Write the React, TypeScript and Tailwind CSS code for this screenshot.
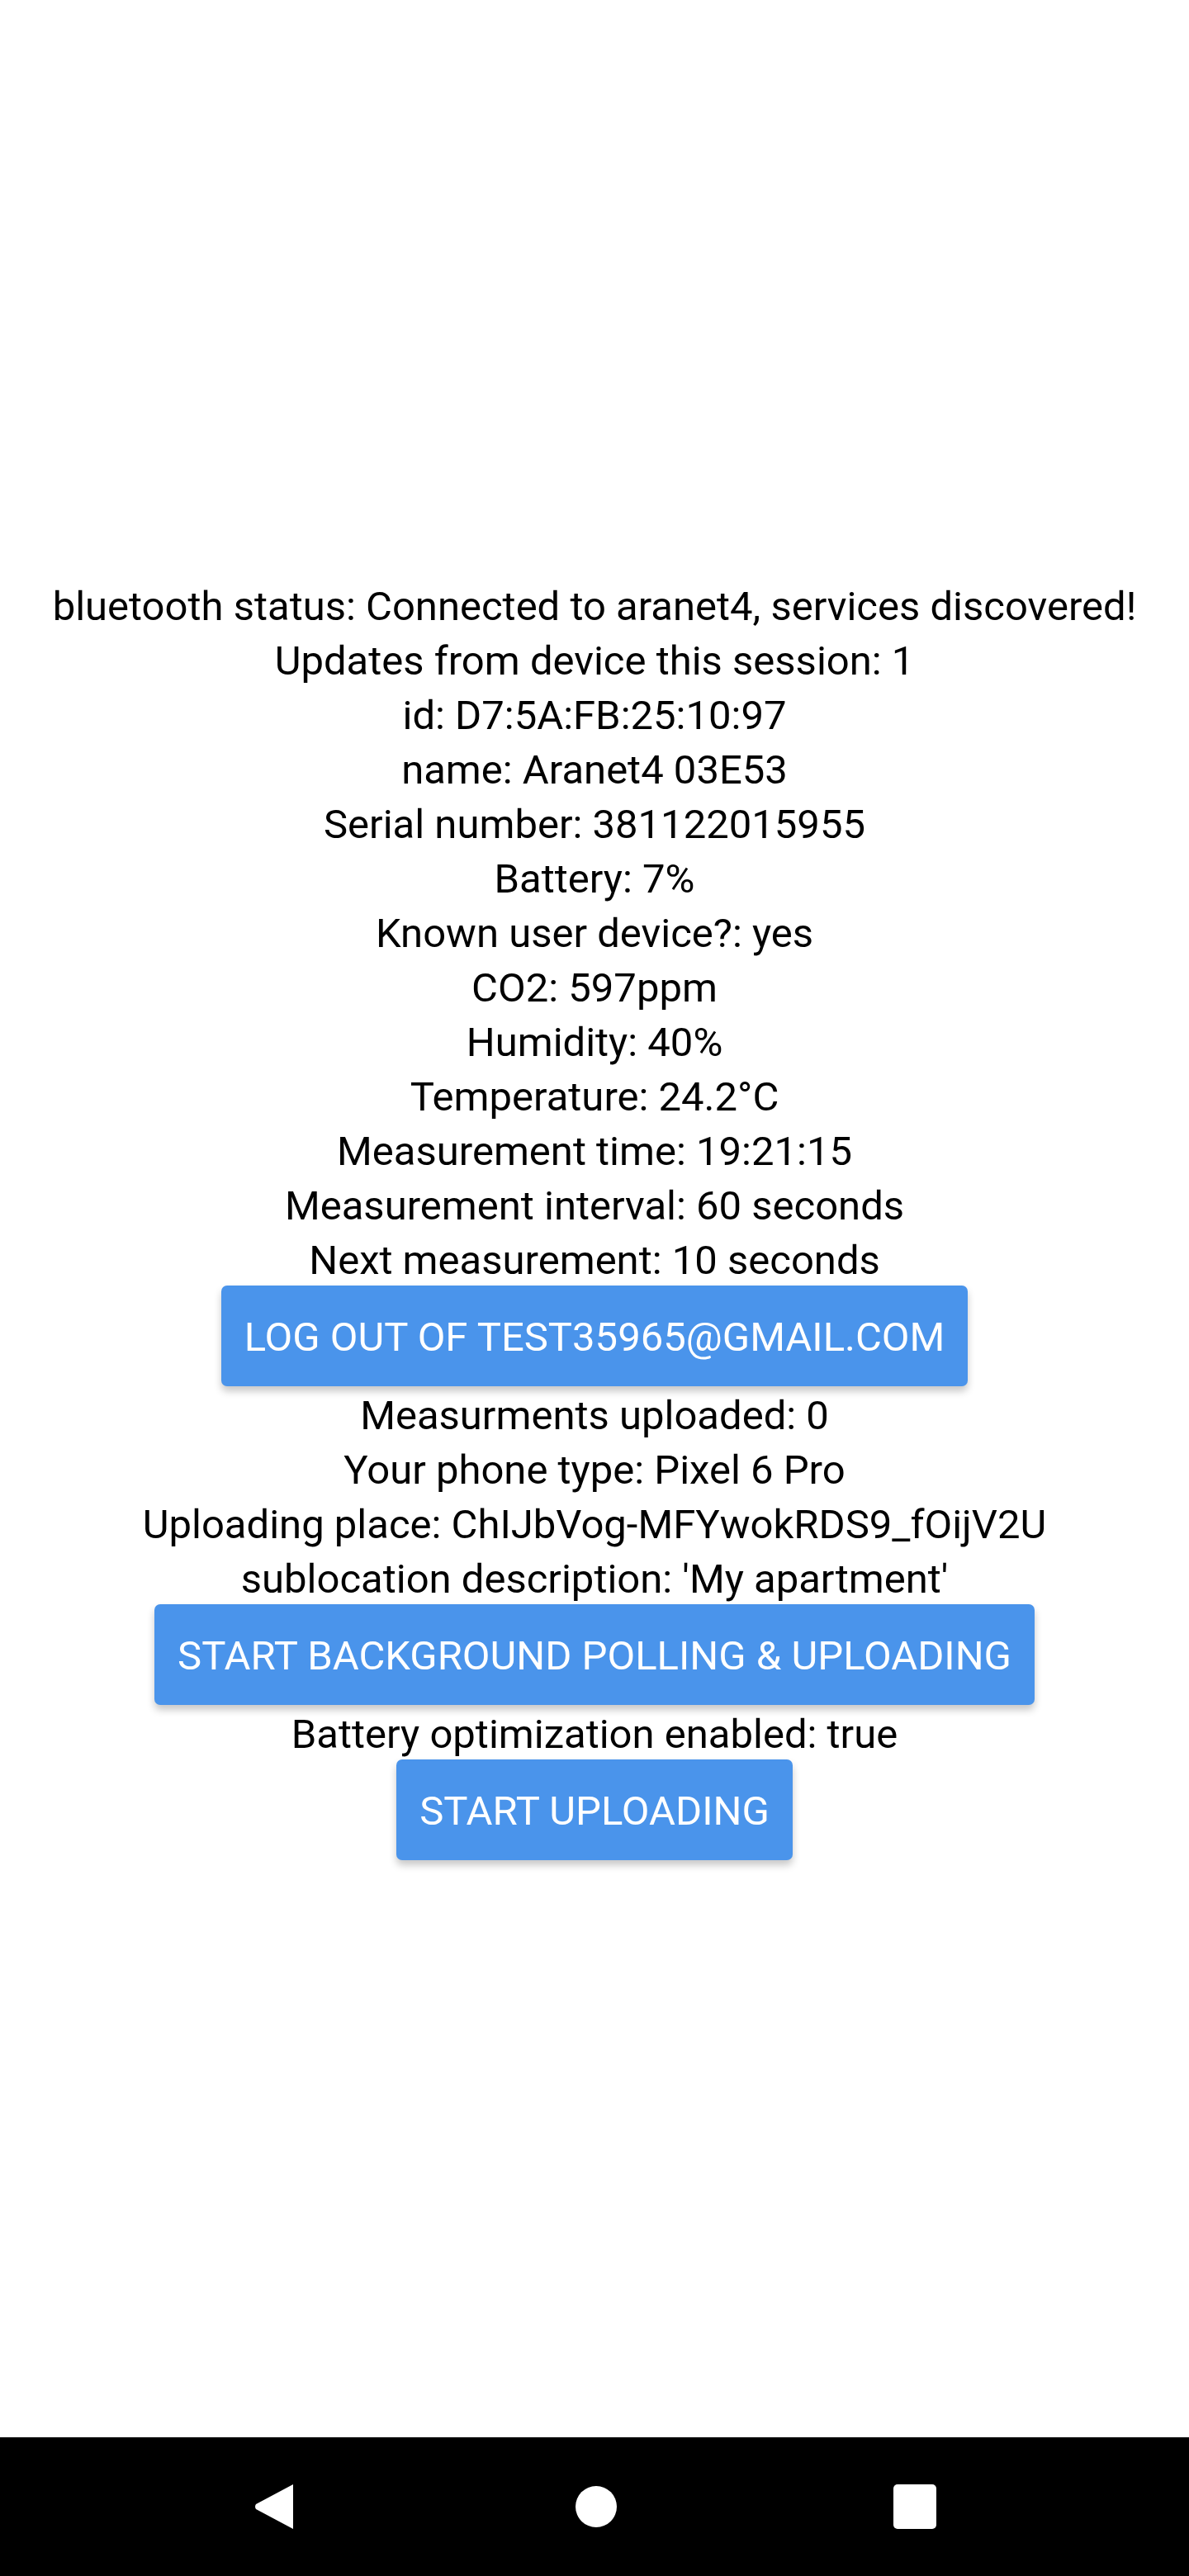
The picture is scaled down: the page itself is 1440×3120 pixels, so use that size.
const infoTop = [
  'bluetooth status: Connected to aranet4, services discovered!',
  'Updates from device this session: 1',
  'id: D7:5A:FB:25:10:97',
  'name: Aranet4 03E53',
  'Serial number: 381122015955',
  'Battery: 7%',
  'Known user device?: yes',
  'CO2: 597ppm',
  'Humidity: 40%',
  'Temperature: 24.2°C',
  'Measurement time: 19:21:15',
  'Measurement interval: 60 seconds',
  'Next measurement: 10 seconds',
];

const infoMiddle = [
  'Measurments uploaded: 0',
  'Your phone type: Pixel 6 Pro',
  'Uploading place: ChIJbVog-MFYwokRDS9_fOijV2U',
  "sublocation description: 'My apartment'",
];

function Line({ children }: { children: React.ReactNode }) {
  return <p className="whitespace-nowrap pt-[6px] text-center text-[49px] leading-[60px] text-black">{children}</p>;
}

function AndroidButton({ label }: { label: string }) {
  return (
    <button
      type="button"
      className="whitespace-nowrap rounded-[7px] bg-[#4a94eb] px-[28px] pb-[28px] pt-[31px] text-[49px] font-normal uppercase leading-[63px] text-white shadow-[0_6px_10px_rgba(0,0,0,0.22)]"
    >
      {label}
    </button>
  );
}

function NavBar() {
  return (
    <div className="flex h-[168px] items-center justify-center bg-black">
      <div className="flex items-center pl-[2px]">
        <svg width="48" height="56" viewBox="0 0 48 56">
          <path d="M47 1 L47 55 L2 31 Q0 28 2 25 Z" fill="#fff" />
        </svg>
        <span className="ml-[341px] h-[50px] w-[50px] rounded-full bg-white" />
        <span className="ml-[335px] h-[54px] w-[52px] rounded-[5px] bg-white" />
      </div>
    </div>
  );
}

export default function App() {
  return (
    <div className="flex h-[3120px] w-[1440px] flex-col bg-white" style={{ fontFamily: 'Roboto, "Noto Sans", sans-serif' }}>
      <main className="flex h-[2952px] flex-col items-center justify-center">
        {infoTop.map((line) => (
          <Line key={line}>{line}</Line>
        ))}
        <AndroidButton label="Log out of test35965@gmail.com" />
        {infoMiddle.map((line) => (
          <Line key={line}>{line}</Line>
        ))}
        <AndroidButton label="Start background polling & uploading" />
        <Line>Battery optimization enabled: true</Line>
        <AndroidButton label="Start uploading" />
      </main>
      <NavBar />
    </div>
  );
}
